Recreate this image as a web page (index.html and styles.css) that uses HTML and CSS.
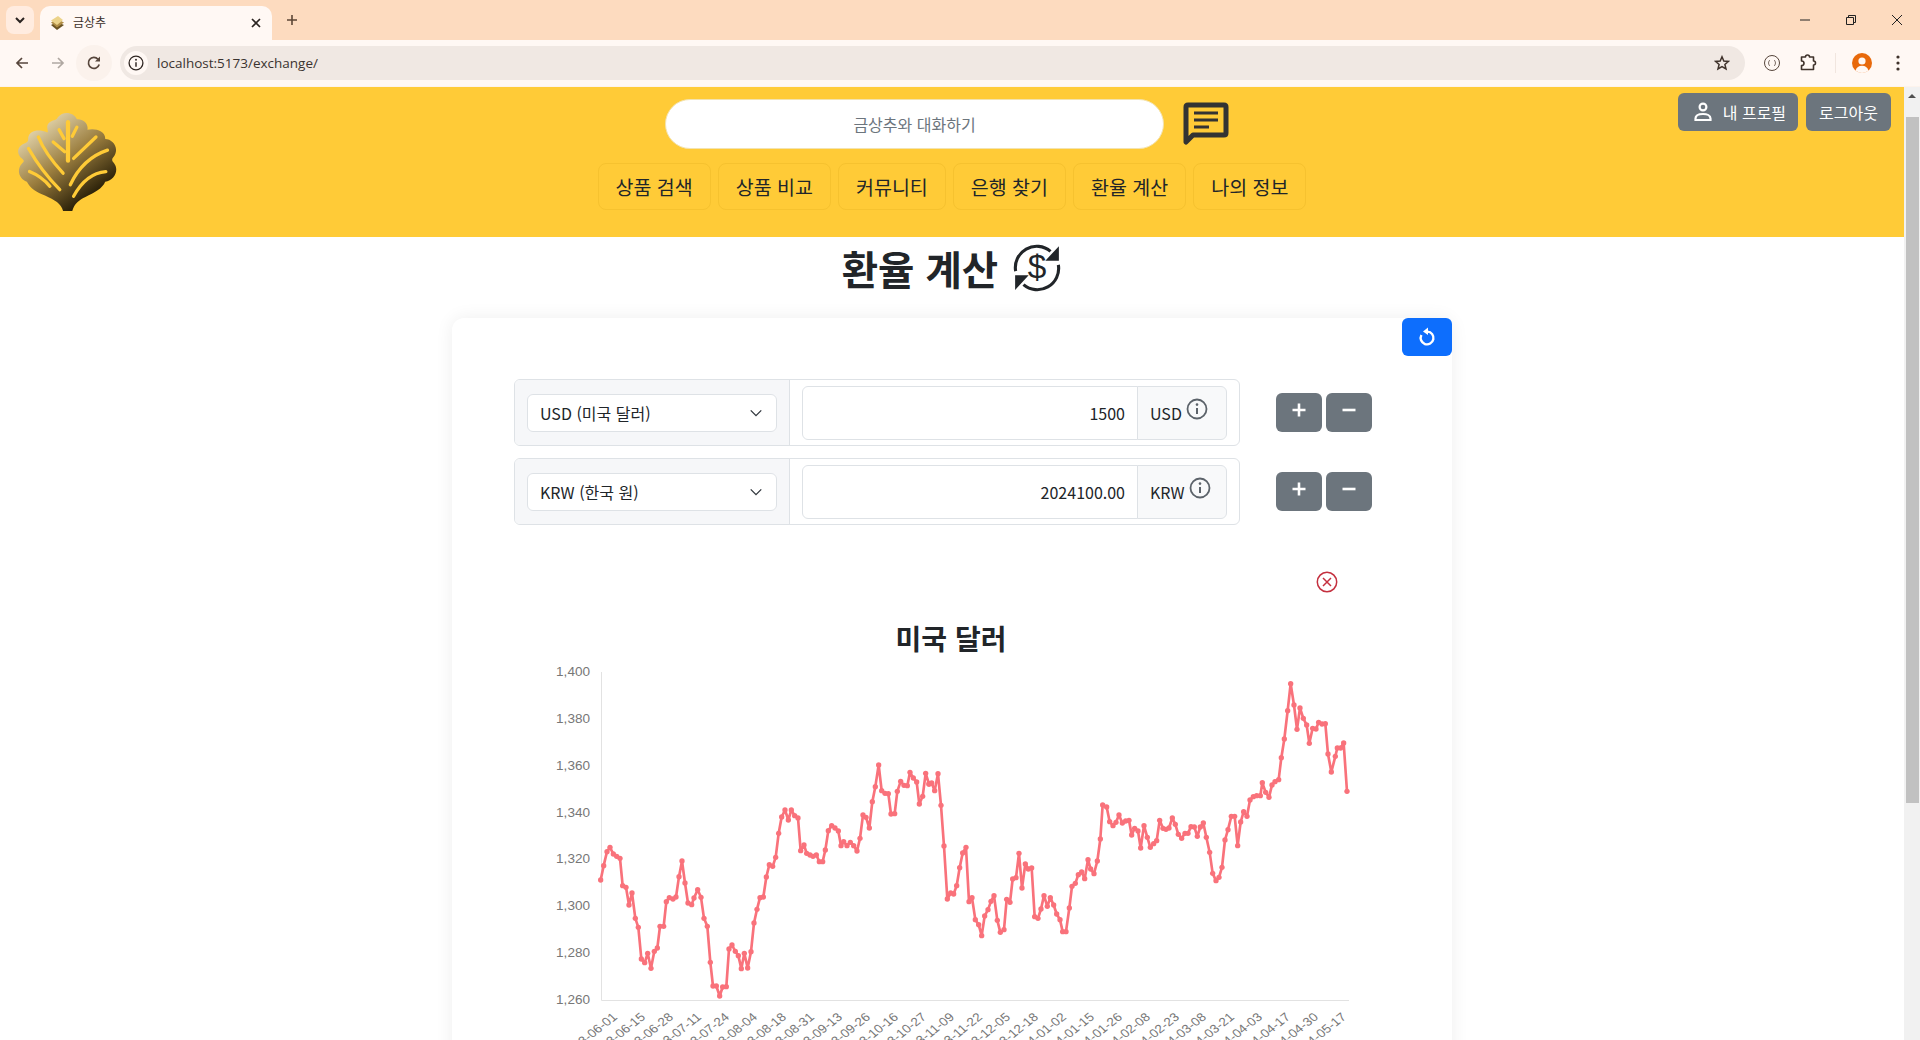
FILE: index.html
```html
<!DOCTYPE html>
<html lang="ko">
<head>
    <meta charset="UTF-8">
    <meta name="viewport" content="width=device-width, initial-scale=1.0">
    <title>금상추</title>
    <link rel="stylesheet" href="styles.css">
</head>
<body>
    <svg class="icon-defs" width="0" height="0">
        <defs>
            <linearGradient id="leafFill" x1="0.12" y1="0.12" x2="0.72" y2="0.95">
                <stop offset="0" stop-color="#e9dcb6"/>
                <stop offset="0.5" stop-color="#9a7d3e"/>
                <stop offset="1" stop-color="#191200"/>
            </linearGradient>
            <symbol id="leaf" viewBox="50 62 310 308">
                <path fill="url(#leafFill)" d="M190 365 C184 342 165 332 135 318 C110 308 90 296 80 276 C58 268 46 240 66 220 C72 214 72 212 66 206 C46 192 50 166 76 158 C84 154 84 150 84 142 C88 120 115 114 142 126 C148 122 136 110 146 98 C158 86 170 92 174 80 C190 60 222 64 232 86 C250 84 268 98 264 118 C285 112 320 120 318 146 C342 146 364 176 342 202 C338 207 338 212 344 218 C362 240 346 272 318 276 C310 296 285 310 258 322 C240 330 224 342 218 365 Z"/>
                <g fill="none" stroke="#ffcb37" stroke-width="10" stroke-linecap="round">
                    <path stroke-width="13" d="M205 95 V212"/>
                    <path d="M178 118 L193 145 M232 110 L218 138 M160 155 L195 185 M290 140 L222 205"/>
                    <path d="M115 140 Q135 190 190 250 M325 180 Q250 205 212 285 M85 175 Q125 245 180 300"/>
                    <path d="M88 245 Q125 260 150 290 M320 245 Q260 250 222 320"/>
                </g>
            </symbol>
            <symbol id="info" viewBox="0 0 22 22">
                <circle cx="11" cy="11" r="9.5" fill="none" stroke="currentColor" stroke-width="1.8"/>
                <circle cx="11" cy="6.6" r="1.3" fill="currentColor"/>
                <path d="M11 10 V16" stroke="currentColor" stroke-width="2"/>
            </symbol>
            <symbol id="plus" viewBox="0 0 14 14">
                <path d="M7 0.5 V13.5 M0.5 7 H13.5" stroke="currentColor" stroke-width="2.6"/>
            </symbol>
            <symbol id="minus" viewBox="0 0 14 14">
                <path d="M0.5 7 H13.5" stroke="currentColor" stroke-width="2.6"/>
            </symbol>
        </defs>
    </svg>

    <div class="tabstrip">
        <button class="tab-search">
            <svg width="12" height="12" viewBox="0 0 12 12"><path d="M2 4 L6 8 L10 4" fill="none" stroke="#2a2320" stroke-width="2"/></svg>
        </button>
        <div class="tab">
            <svg class="tab-favicon" width="16" height="16" viewBox="0 0 16 16">
                <path d="M8 7 L15 10 L8 15 L2 10 Z" fill="#6b5322"/>
                <path d="M8 4 L15 7.5 L8 12.5 L2 7.5 Z" fill="#b08d45"/>
                <path d="M9 1 L14 5 L8 10 L2 5.5 Z" fill="#ecd38a"/>
            </svg>
            <span class="tab-title">금상추</span>
            <svg class="tab-close" width="12" height="12" viewBox="0 0 12 12"><path d="M2 2 L10 10 M10 2 L2 10" stroke="#2a2320" stroke-width="1.7"/></svg>
        </div>
        <svg class="new-tab" width="14" height="14" viewBox="0 0 14 14"><path d="M7 2 V12 M2 7 H12" stroke="#5c4636" stroke-width="1.6"/></svg>
        <div class="window-controls">
            <span class="window-btn"><svg width="12" height="12" viewBox="0 0 12 12"><path d="M1 6 H11" stroke="#222" stroke-width="1"/></svg></span>
            <span class="window-btn"><svg width="12" height="12" viewBox="0 0 12 12"><path d="M1.5 3.5 H8.5 V10.5 H1.5 Z M3.5 3.5 V1.5 H10.5 V8.5 H8.5" fill="none" stroke="#222" stroke-width="1"/></svg></span>
            <span class="window-btn"><svg width="12" height="12" viewBox="0 0 12 12"><path d="M1 1 L11 11 M11 1 L1 11" stroke="#222" stroke-width="1"/></svg></span>
        </div>
    </div>

    <div class="toolbar">
        <span class="tool-btn"><svg width="16" height="16" viewBox="0 0 16 16"><path d="M14 8 H3 M8 3 L3 8 L8 13" fill="none" stroke="#57463c" stroke-width="1.7"/></svg></span>
        <span class="tool-btn"><svg width="16" height="16" viewBox="0 0 16 16"><path d="M2 8 H13 M8 3 L13 8 L8 13" fill="none" stroke="#b0a8a2" stroke-width="1.7"/></svg></span>
        <span class="tool-btn tool-btn-hover"><svg width="16" height="16" viewBox="0 0 16 16"><path d="M13.2 9.5 A5.5 5.5 0 1 1 12 4.2" fill="none" stroke="#57463c" stroke-width="1.7"/><path d="M14 1.5 V6.5 H9 Z" fill="#57463c"/></svg></span>
        <div class="omnibox">
            <span class="omnibox-info"><svg width="16" height="16"><use href="#info"/></svg></span>
            <span class="omnibox-url">localhost:5173/exchange/</span>
            <svg class="omnibox-star" width="16" height="16" viewBox="0 0 16 16"><path d="M8 1.8 L9.8 6 L14.4 6.4 L10.9 9.4 L12 13.9 L8 11.5 L4 13.9 L5.1 9.4 L1.6 6.4 L6.2 6 Z" fill="none" stroke="#3f322b" stroke-width="1.5"/></svg>
        </div>
        <span class="tool-btn"><svg width="18" height="18" viewBox="0 0 18 18"><circle cx="9" cy="9" r="7.5" fill="none" stroke="#57463c" stroke-width="1"/><path d="M7 6.5 Q5.8 6.5 5.8 7.5 V8.4 L5 9 L5.8 9.6 V10.5 Q5.8 11.5 7 11.5 M11 6.5 Q12.2 6.5 12.2 7.5 V8.4 L13 9 L12.2 9.6 V10.5 Q12.2 11.5 11 11.5" fill="none" stroke="#57463c" stroke-width="0.8"/></svg></span>
        <span class="tool-btn"><svg width="18" height="18" viewBox="0 0 18 18"><path d="M2.5 3 H6.5 Q6.5 1 8.5 1 Q10.5 1 10.5 3 H14.5 V7 Q16.5 7 16.5 9 Q16.5 11 14.5 11 V15.5 H2.5 V11.5 Q5 11.5 5 9.2 Q5 7 2.5 7 Z" fill="none" stroke="#3f322b" stroke-width="1.6" stroke-linejoin="round"/></svg></span>
        <span class="tool-divider"></span>
        <span class="tool-btn"><svg width="20" height="20" viewBox="0 0 20 20"><circle cx="10" cy="10" r="10" fill="#e8690b"/><circle cx="10" cy="8" r="3.6" fill="#fff8f4"/><path d="M3.5 17.5 Q5 12.8 10 12.8 Q15 12.8 16.5 17.5 Q13.5 20 10 20 Q6.5 20 3.5 17.5 Z" fill="#fff8f4"/></svg></span>
        <span class="tool-btn"><svg width="4" height="16" viewBox="0 0 4 16"><circle cx="2" cy="2" r="1.6" fill="#3f322b"/><circle cx="2" cy="8" r="1.6" fill="#3f322b"/><circle cx="2" cy="14" r="1.6" fill="#3f322b"/></svg></span>
    </div>

    <div class="viewport">
        <div class="page">
            <header class="site-header">
                <div class="logo-col">
                    <svg class="logo" width="102" height="102"><use href="#leaf"/></svg>
                </div>
                <div class="header-center">
                    <div class="chat-row">
                        <input class="chat-input" type="text" placeholder="금상추와 대화하기">
                        <svg class="chat-icon" width="46" height="44" viewBox="0 0 46 44">
                            <path d="M3 40 V5 Q3 3 5 3 H41 Q43 3 43 5 V31 Q43 33 41 33 H10 Z" fill="none" stroke="#333" stroke-width="5" stroke-linejoin="round"/>
                            <path d="M11 11 H35 M11 18 H35 M11 25 H26" stroke="#333" stroke-width="3.2"/>
                        </svg>
                    </div>
                    <nav class="main-nav">
                        <a class="nav-btn">상품 검색</a>
                        <a class="nav-btn">상품 비교</a>
                        <a class="nav-btn">커뮤니티</a>
                        <a class="nav-btn">은행 찾기</a>
                        <a class="nav-btn">환율 계산</a>
                        <a class="nav-btn">나의 정보</a>
                    </nav>
                </div>
                <div class="user-col">
                    <button class="btn-gray btn-profile">
                        <svg width="20" height="20" viewBox="0 0 20 20" fill="none" stroke="#fff" stroke-width="2.2"><circle cx="10" cy="5" r="3.4"/><path d="M2.5 18 V16.5 C2.5 13.5 6 12 10 12 C14 12 17.5 13.5 17.5 16.5 V18 Z"/></svg>
                        내 프로필
                    </button>
                    <button class="btn-gray btn-logout">로그아웃</button>
                </div>
            </header>

            <main>
                <h1 class="page-title">
                    환율 계산
                    <svg class="title-icon" width="50" height="50" viewBox="0 0 48 48">
                        <path d="M3.5 27 A20.5 20.5 0 0 1 37 8 M44.5 21 A20.5 20.5 0 0 1 11 40" fill="none" stroke="#212529" stroke-width="3"/>
                        <path d="M45 3 V17 H32 Z M3 45 V31 H16 Z" fill="#212529"/>
                        <text x="24" y="34" text-anchor="middle" class="title-dollar">$</text>
                    </svg>
                </h1>

                <section class="exchange-card">
                    <div class="reset-row">
                        <button class="btn-reset">
                            <svg width="20" height="20" viewBox="0 0 20 20"><path d="M10.5 4.6 A6.4 6.4 0 1 1 4.4 8" fill="none" stroke="#fff" stroke-width="2.4"/><path d="M11 0.5 V8 L6 4.4 Z" fill="#fff"/></svg>
                        </button>
                    </div>

                    <div class="currency-rows">
                        <div class="currency-row">
                            <div class="input-group">
                                <div class="select-cell">
                                    <select class="currency-select"><option>USD (미국 달러)</option></select>
                                </div>
                                <div class="amount-cell">
                                    <input class="amount-input" type="text" value="1500">
                                    <div class="amount-addon">USD <svg class="info-icon" width="22" height="22"><use href="#info"/></svg></div>
                                </div>
                            </div>
                            <div class="step-btns">
                                <button class="btn-gray btn-step"><svg width="14" height="14"><use href="#plus"/></svg></button>
                                <button class="btn-gray btn-step"><svg width="14" height="14"><use href="#minus"/></svg></button>
                            </div>
                        </div>
                        <div class="currency-row">
                            <div class="input-group">
                                <div class="select-cell">
                                    <select class="currency-select"><option>KRW (한국 원)</option></select>
                                </div>
                                <div class="amount-cell">
                                    <input class="amount-input" type="text" value="2024100.00">
                                    <div class="amount-addon">KRW <svg class="info-icon" width="22" height="22"><use href="#info"/></svg></div>
                                </div>
                            </div>
                            <div class="step-btns">
                                <button class="btn-gray btn-step"><svg width="14" height="14"><use href="#plus"/></svg></button>
                                <button class="btn-gray btn-step"><svg width="14" height="14"><use href="#minus"/></svg></button>
                            </div>
                        </div>
                    </div>

                    <div class="close-row">
                        <svg width="22" height="22" viewBox="0 0 22 22"><circle cx="11" cy="11" r="9.7" fill="none" stroke="#c4303f" stroke-width="1.5"/><path d="M7 7 L15 15 M15 7 L7 15" stroke="#c4303f" stroke-width="1.5"/></svg>
                    </div>

                    <h2 class="chart-title">미국 달러</h2>

                    <svg class="rate-chart" width="840" height="450" viewBox="0 0 840 450">
                        <defs>
                            <marker id="dot" markerUnits="userSpaceOnUse" markerWidth="20" markerHeight="20" refX="10" refY="10">
                                <circle cx="10" cy="10" r="8" fill="#f9727b"/>
                            </marker>
                        </defs>
                        <path class="chart-axis" d="M71.5 16 V344.5 H819"/>
                        <g class="y-labels" text-anchor="end">
                            <text transform="translate(60 20) scale(1.13 1)">1,400</text>
                            <text transform="translate(60 67) scale(1.13 1)">1,380</text>
                            <text transform="translate(60 114) scale(1.13 1)">1,360</text>
                            <text transform="translate(60 161) scale(1.13 1)">1,340</text>
                            <text transform="translate(60 207) scale(1.13 1)">1,320</text>
                            <text transform="translate(60 254) scale(1.13 1)">1,300</text>
                            <text transform="translate(60 301) scale(1.13 1)">1,280</text>
                            <text transform="translate(60 348) scale(1.13 1)">1,260</text>
                        </g>
                        <g class="x-labels" text-anchor="end">
                            <text transform="translate(88 362) scale(1.13 1) rotate(-42)">2023-06-01</text>
                            <text transform="translate(116 362) scale(1.13 1) rotate(-42)">2023-06-15</text>
                            <text transform="translate(144 362) scale(1.13 1) rotate(-42)">2023-06-28</text>
                            <text transform="translate(172 362) scale(1.13 1) rotate(-42)">2023-07-11</text>
                            <text transform="translate(200 362) scale(1.13 1) rotate(-42)">2023-07-24</text>
                            <text transform="translate(228 362) scale(1.13 1) rotate(-42)">2023-08-04</text>
                            <text transform="translate(257 362) scale(1.13 1) rotate(-42)">2023-08-18</text>
                            <text transform="translate(285 362) scale(1.13 1) rotate(-42)">2023-08-31</text>
                            <text transform="translate(313 362) scale(1.13 1) rotate(-42)">2023-09-13</text>
                            <text transform="translate(341 362) scale(1.13 1) rotate(-42)">2023-09-26</text>
                            <text transform="translate(369 362) scale(1.13 1) rotate(-42)">2023-10-16</text>
                            <text transform="translate(397 362) scale(1.13 1) rotate(-42)">2023-10-27</text>
                            <text transform="translate(425 362) scale(1.13 1) rotate(-42)">2023-11-09</text>
                            <text transform="translate(453 362) scale(1.13 1) rotate(-42)">2023-11-22</text>
                            <text transform="translate(481 362) scale(1.13 1) rotate(-42)">2023-12-05</text>
                            <text transform="translate(509 362) scale(1.13 1) rotate(-42)">2023-12-18</text>
                            <text transform="translate(537 362) scale(1.13 1) rotate(-42)">2024-01-02</text>
                            <text transform="translate(565 362) scale(1.13 1) rotate(-42)">2024-01-15</text>
                            <text transform="translate(593 362) scale(1.13 1) rotate(-42)">2024-01-26</text>
                            <text transform="translate(621 362) scale(1.13 1) rotate(-42)">2024-02-08</text>
                            <text transform="translate(650 362) scale(1.13 1) rotate(-42)">2024-02-23</text>
                            <text transform="translate(677 362) scale(1.13 1) rotate(-42)">2024-03-08</text>
                            <text transform="translate(705 362) scale(1.13 1) rotate(-42)">2024-03-21</text>
                            <text transform="translate(733 362) scale(1.13 1) rotate(-42)">2024-04-03</text>
                            <text transform="translate(761 362) scale(1.13 1) rotate(-42)">2024-04-17</text>
                            <text transform="translate(789 362) scale(1.13 1) rotate(-42)">2024-04-30</text>
                            <text transform="translate(817 362) scale(1.13 1) rotate(-42)">2024-05-17</text>
                        </g>
                        <g transform="translate(0 -7) scale(0.33333)">
                            <polyline class="rate-line" points="212,693 221,650 231,608 240,595 250,615 260,622 270,628 278,710 288,715 297,768 306,732 316,808 325,835 334,930 344,941 353,913 363,958 373,907 382,897 390,832 401,832 409,758 418,746 429,750 438,744 447,683 456,636 465,702 474,762 485,767 492,747 503,722 513,745 522,808 532,832 541,940 549,1011 559,1011 569,1041 578,1014 589,1013 597,900 606,888 616,907 625,920 634,959 643,913 653,957 663,908 672,822 681,781 690,746 700,744 709,684 718,647 728,652 737,625 746,553 755,504 765,483 775,513 784,483 794,500 804,507 812,605 822,588 830,613 840,618 849,622 859,618 868,638 878,638 886,603 895,545 905,530 915,537 925,546 933,590 941,578 951,590 961,580 971,590 981,606 990,568 999,498 1008,505 1018,537 1027,458 1036,413 1046,348 1055,425 1065,433 1075,434 1083,495 1094,494 1102,427 1112,397 1122,409 1132,410 1140,370 1150,387 1160,399 1168,465 1178,442 1187,373 1197,405"/>
                            <polyline class="rate-line" transform="translate(1200 0)" points="-3,405 5,402 14,425 24,374 33,469 42,591 52,750 62,732 71,735 80,710 89,656 98,612 108,595 117,758 126,746 136,812 146,827 155,860 164,801 174,782 183,757 192,740 202,814 211,850 222,842 230,751 240,760 248,690 258,686 267,613 276,717 286,645 295,660 305,657 314,803 324,808 333,780 342,740 352,772 361,746 371,768 380,795 390,812 398,848 408,848 418,777 426,712 436,703 445,677 455,669 464,689 474,632 482,660 492,674 502,636 511,570 518,468 530,474 539,518 549,530 558,520 567,498 577,522 587,516 597,514 605,558 614,538 624,546 632,597 642,530 652,565 661,595 671,584 680,575 689,514 699,538 708,541 717,537 727,507 736,526 745,556 755,568 765,553 774,553 783,533 793,534 802,562 811,534 820,522 829,565 839,610 848,673 858,695 867,685 876,655 885,573 894,542 904,502 914,502 923,590 932,519 941,488 951,502 960,453 970,443 980,440 991,440 997,401 1007,430 1017,445 1026,408 1035,398 1046,392 1054,326 1063,270 1073,185 1082,104 1092,168 1101,241 1110,177 1120,208 1130,228 1138,283 1148,238 1158,240 1166,220 1176,225 1186,224 1194,315 1204,369 1216,322 1222,297 1232,297 1241,282 1251,427"/>
                        </g>
                    </svg>
                </section>
            </main>
        </div>

        <div class="scrollbar">
            <span class="scroll-arrow"></span>
            <span class="scroll-thumb"></span>
        </div>
    </div>
</body>
</html>
```

FILE: styles.css
```css
* {
    box-sizing: border-box;
}
html, body {
    height: 100%;
}
body {
    display: flex;
    flex-direction: column;
    margin: 0;
    overflow: hidden;
    background: #fff;
    color: #212529;
    font-family: "Noto Sans CJK KR", "Noto Sans", sans-serif;
    font-size: 16px;
    line-height: 1.5;
}
button, input, select {
    font-family: inherit;
    font-size: inherit;
}
.icon-defs {
    position: absolute;
}

/* browser frame */
.tabstrip {
    display: flex;
    flex: none;
    height: 40px;
    padding-left: 6px;
    background: #fddbbf;
}
.tab-search {
    display: flex;
    align-items: center;
    justify-content: center;
    width: 28px;
    height: 28px;
    margin-top: 6px;
    padding: 0;
    border: none;
    border-radius: 8px;
    background: #ffece0;
}
.tab {
    display: flex;
    align-items: center;
    width: 232px;
    height: 34px;
    margin-top: 6px;
    margin-left: 6px;
    padding: 0 10px 0 9px;
    border-radius: 10px 10px 0 0;
    background: #fff8f4;
}
.tab-favicon {
    margin-right: 8px;
}
.tab-title {
    flex: 1;
    margin-top: -2px;
    color: #3b2f29;
    font-size: 12px;
}
.new-tab {
    align-self: center;
    margin-left: 13px;
}
.window-controls {
    display: flex;
    margin-left: auto;
}
.window-btn {
    display: flex;
    align-items: center;
    justify-content: center;
    width: 46px;
    height: 40px;
}
.toolbar {
    display: flex;
    flex: none;
    align-items: center;
    height: 47px;
    padding: 0 4px 1px;
    border-bottom: 1px solid #fdf3ec;
    background: #fff8f4;
}
.tool-btn {
    display: flex;
    align-items: center;
    justify-content: center;
    width: 36px;
    height: 36px;
}
.tool-btn-hover {
    position: relative;
    border-radius: 50%;
    background: #fbf2ec;
}
.tool-divider {
    width: 1px;
    height: 20px;
    margin: 0 8px 0 9px;
    background: #f1e6df;
}
.omnibox {
    display: flex;
    flex: 1;
    align-items: center;
    height: 34px;
    margin: 0 9px 0 8px;
    padding: 0 15px 0 4px;
    border-radius: 17px;
    background: #f0e8e3;
}
.omnibox-info {
    display: flex;
    align-items: center;
    justify-content: center;
    width: 24px;
    height: 24px;
    border-radius: 50%;
    background: #fff8f4;
    color: #2f2622;
}
.omnibox-url {
    flex: 1;
    margin-left: 9px;
    padding-top: 1px;
    color: #3b3330;
    font-family: "Open Sans", sans-serif;
    font-size: 13.5px;
}

/* page area */
.viewport {
    display: flex;
    flex: 1;
    min-height: 0;
}
.page {
    flex: 1;
    min-width: 0;
    overflow: hidden;
}
.scrollbar {
    display: flex;
    flex: none;
    flex-direction: column;
    align-items: center;
    width: 16px;
    background: #f1f1f1;
}
.scroll-arrow {
    width: 0;
    height: 0;
    margin-top: 7px;
    border-right: 4px solid transparent;
    border-bottom: 4px solid #505050;
    border-left: 4px solid transparent;
}
.scroll-thumb {
    width: 13px;
    height: 686px;
    margin-top: 19px;
    background: #c1c1c1;
}

/* site header */
.site-header {
    display: grid;
    grid-template-columns: 1fr auto 1fr;
    height: 150px;
    background: #ffcb37;
}
.logo-col {
    padding: 24px 0 0 17px;
}
.logo {
    display: block;
}
.header-center {
    padding-top: 12px;
}
.chat-row {
    display: flex;
    align-items: center;
    justify-content: center;
    margin-right: 10px;
}
.chat-input {
    width: 499px;
    height: 50px;
    padding: 0 16px;
    border: 1px solid #f3e3b0;
    border-radius: 25px;
    background: #fff;
    text-align: center;
}
.chat-input::placeholder {
    color: #6c757d;
}
.chat-icon {
    margin-left: 19px;
}
.main-nav {
    display: flex;
    gap: 7px;
    margin-top: 14px;
}
.nav-btn {
    padding: 8px 17px;
    border: 1px solid #f6c22f;
    border-radius: 8px;
    color: #212529;
    font-size: 19.5px;
    white-space: nowrap;
}
.user-col {
    display: flex;
    align-items: flex-start;
    justify-content: flex-end;
    gap: 8px;
    padding: 6px 13px 0 0;
}
.btn-gray {
    height: 38px;
    padding: 0 12px;
    border: none;
    border-radius: 6px;
    background: #6c757d;
    color: #fff;
}
.btn-logout {
    padding: 0 13px;
}
.btn-profile {
    display: flex;
    align-items: center;
    gap: 10px;
    padding-left: 15px;
}

/* content */
.page-title {
    display: flex;
    align-items: center;
    justify-content: center;
    gap: 14px;
    height: 81px;
    margin: 0;
    padding-bottom: 20px;
    font-size: 39.5px;
    font-weight: 700;
}
.title-dollar {
    font-family: "Liberation Sans", sans-serif;
    font-size: 32px;
    font-weight: 400;
    fill: #212529;
}
.exchange-card {
    width: 1000px;
    margin: 0 auto;
    padding-left: 62px;
    border-radius: 12px;
    background: #fff;
    box-shadow: 0 0 18px rgba(0, 0, 0, 0.07);
}
.reset-row {
    display: flex;
    justify-content: flex-end;
}
.btn-reset {
    display: flex;
    align-items: center;
    justify-content: center;
    width: 50px;
    height: 38px;
    padding: 0;
    border: none;
    border-radius: 6px;
    background: #0d6efd;
}
.currency-rows {
    display: flex;
    flex-direction: column;
    gap: 12px;
    margin-top: 23px;
}
.currency-row {
    display: flex;
    align-items: center;
    gap: 36px;
}
.input-group {
    display: flex;
    width: 726px;
    height: 67px;
    border: 1px solid #dee2e6;
    border-radius: 6px;
    overflow: hidden;
}
.select-cell {
    display: flex;
    flex: none;
    align-items: center;
    width: 275px;
    padding: 0 12px;
    border-right: 1px solid #dee2e6;
    background: #f6f7f9;
}
.currency-select {
    width: 100%;
    height: 38px;
    padding: 0 36px 0 12px;
    border: 1px solid #dee2e6;
    border-radius: 6px;
    background: #fff url("data:image/svg+xml,%3csvg xmlns='http://www.w3.org/2000/svg' viewBox='0 0 16 16'%3e%3cpath fill='none' stroke='%23343a40' stroke-width='1.6' d='m2 5 6 6 6-6'/%3e%3c/svg%3e") no-repeat right 13px center / 14px 14px;
    color: #212529;
    appearance: none;
}
.amount-cell {
    display: flex;
    flex: 1;
    align-items: center;
    padding: 0 12px;
}
.amount-input {
    flex: 1;
    min-width: 0;
    height: 54px;
    padding: 0 12px;
    border: 1px solid #dee2e6;
    border-radius: 6px 0 0 6px;
    color: #212529;
    text-align: right;
}
.amount-addon {
    display: flex;
    flex: none;
    align-items: center;
    gap: 4px;
    width: 90px;
    height: 54px;
    margin-left: -1px;
    padding-left: 12px;
    border: 1px solid #dee2e6;
    border-radius: 0 6px 6px 0;
    background: #f8f9fa;
    color: #212529;
}
.info-icon {
    margin-top: -7px;
    color: #5c636a;
}
.step-btns {
    display: flex;
    gap: 4px;
}
.btn-step {
    display: flex;
    align-items: center;
    justify-content: center;
    width: 46px;
    height: 39px;
    padding: 0 0 5px;
}
.close-row {
    display: flex;
    justify-content: flex-end;
    height: 22px;
    margin-top: 46px;
    padding-right: 114px;
}
.chart-title {
    width: 874px;
    height: 35px;
    margin: 28px 0 0;
    color: #212529;
    font-size: 28px;
    font-weight: 700;
    line-height: 34px;
    text-align: center;
}
.rate-chart {
    display: block;
    margin-left: 16px;
}
.chart-axis {
    fill: none;
    stroke: #e2e2e2;
    stroke-width: 1;
}
.y-labels, .x-labels {
    fill: #777;
    font-family: "Liberation Sans", sans-serif;
    font-size: 12px;
}
.rate-line {
    fill: none;
    stroke: #f9727b;
    stroke-width: 8;
    stroke-linejoin: round;
    marker-start: url(#dot);
    marker-mid: url(#dot);
    marker-end: url(#dot);
}
```
